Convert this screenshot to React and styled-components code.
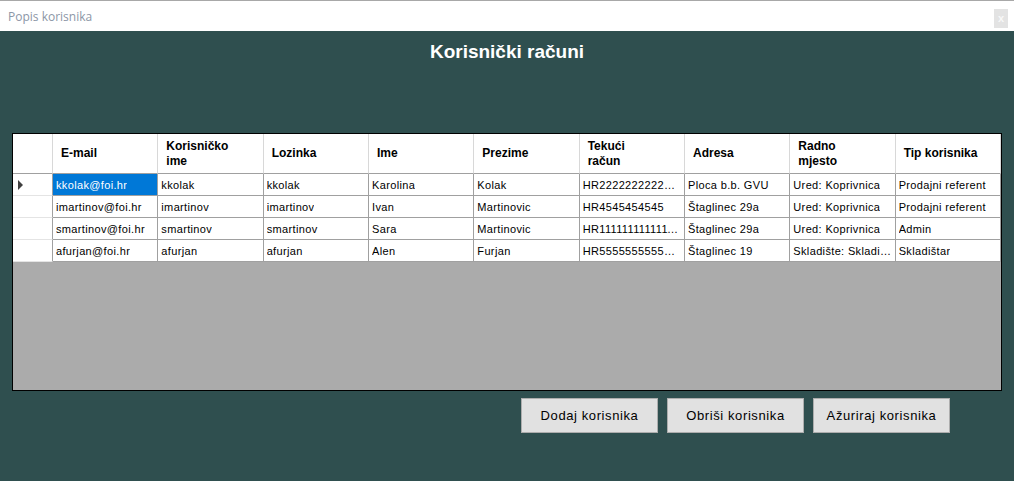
import React from "react";
import styled, { createGlobalStyle } from "styled-components";

const GlobalStyle = createGlobalStyle`
  html, body {
    margin: 0;
    padding: 0;
    background: #2f4f4f;
  }
  * { box-sizing: border-box; }
`;

const Window = styled.div`
  width: 1014px;
  height: 481px;
  display: flex;
  flex-direction: column;
  background: #2f4f4f;
  font-family: "Liberation Sans", Arial, sans-serif;
  overflow: hidden;
`;

const TitleBar = styled.div`
  height: 31px;
  background: #fff;
  border-top: 1px solid #a8a8a8;
  display: flex;
  align-items: center;
  justify-content: space-between;
  padding: 0 6px 0 8px;
`;

const WindowTitle = styled.span`
  font-family: "Open Sans", sans-serif;
  font-size: 12px;
  color: #8c96a6;
`;

const CloseButton = styled.div`
  width: 14px;
  height: 19px;
  margin-top: 4px;
  background: #e3e3e3;
  color: #f8f8f8;
  font-size: 11px;
  font-weight: bold;
  display: flex;
  align-items: center;
  justify-content: center;
`;

const Content = styled.div`
  flex: 1;
  display: flex;
  flex-direction: column;
  padding: 0 12px;
`;

const Heading = styled.h1`
  margin: 9px 0 0;
  height: 93px;
  text-align: center;
  color: #fff;
  font-size: 19px;
  font-weight: bold;
  line-height: 24px;
`;

const Grid = styled.div`
  width: 990px;
  height: 258px;
  border: 1px solid #000;
  background: #ababab;
  display: grid;
  grid-template-columns: 40px repeat(9, 1fr);
  grid-auto-rows: 22px;
  grid-template-rows: 40px;
  align-content: start;
`;

const HeadCell = styled.div`
  background: #fff;
  border-right: 1px solid #d8d8d8;
  border-bottom: 1px solid #a0a0a0;
  padding: 0 8px;
  display: flex;
  align-items: center;
  font-size: 12px;
  font-weight: bold;
  line-height: 15px;
  color: #000;
`;

const RowHead = styled.div`
  background: #fff;
  border-right: 1px solid #a0a0a0;
  border-bottom: 1px solid #e4e4e4;
  display: flex;
  align-items: center;
  padding-left: 5px;
`;

const Cell = styled.div`
  background: ${(p) => (p.$selected ? "#0078d7" : "#fff")};
  color: ${(p) => (p.$selected ? "#fff" : "#000")};
  border-right: 1px solid #a0a0a0;
  border-bottom: 1px solid #a0a0a0;
  padding: 0 3px;
  display: flex;
  align-items: center;
  font-size: 11px;
  letter-spacing: 0.35px;
  white-space: nowrap;
  min-width: 0;
`;

const CellText = styled.span`
  overflow: hidden;
  text-overflow: ellipsis;
`;

const Arrow = styled.svg`
  width: 6px;
  height: 10px;
`;

const Actions = styled.div`
  display: flex;
  justify-content: flex-end;
  gap: 9px;
  margin-top: 7px;
  padding-right: 52px;
`;

const Button = styled.button`
  width: 137px;
  height: 35px;
  background: #e1e1e1;
  border: 1px solid #adadad;
  font-family: "Liberation Sans", Arial, sans-serif;
  font-size: 13px;
  letter-spacing: 0.6px;
  color: #000;
  padding: 0;
`;

const columns = [
  ["E-mail"],
  ["Korisničko", "ime"],
  ["Lozinka"],
  ["Ime"],
  ["Prezime"],
  ["Tekući", "račun"],
  ["Adresa"],
  ["Radno", "mjesto"],
  ["Tip korisnika"],
];

const users = [
  ["kkolak@foi.hr", "kkolak", "kkolak", "Karolina", "Kolak", "HR2222222222222222", "Ploca b.b. GVU", "Ured: Koprivnica", "Prodajni referent"],
  ["imartinov@foi.hr", "imartinov", "imartinov", "Ivan", "Martinovic", "HR4545454545", "Štaglinec 29a", "Ured: Koprivnica", "Prodajni referent"],
  ["smartinov@foi.hr", "smartinov", "smartinov", "Sara", "Martinovic", "HR1111111111111111", "Štaglinec 29a", "Ured: Koprivnica", "Admin"],
  ["afurjan@foi.hr", "afurjan", "afurjan", "Alen", "Furjan", "HR5555555555555555", "Štaglinec 19", "Skladište: Skladište Koprivnica", "Skladištar"],
];

export default function App() {
  return (
    <>
      <GlobalStyle />
      <Window>
        <TitleBar>
          <WindowTitle>Popis korisnika</WindowTitle>
          <CloseButton>x</CloseButton>
        </TitleBar>
        <Content>
          <Heading>Korisnički računi</Heading>
          <Grid>
            <HeadCell />
            {columns.map((c, i) => (
              <HeadCell key={i}>
                <span>
                  {c[0]}
                  {c[1] && <br />}
                  {c[1]}
                </span>
              </HeadCell>
            ))}
            {users.map((u, r) => (
              <React.Fragment key={r}>
                <RowHead>
                  {r === 0 && (
                    <Arrow viewBox="0 0 6 10">
                      <path d="M0 0 L5 5 L0 10 Z" fill="#404040" />
                    </Arrow>
                  )}
                </RowHead>
                {u.map((v, c) => (
                  <Cell key={c} $selected={r === 0 && c === 0}>
                    <CellText>{v}</CellText>
                  </Cell>
                ))}
              </React.Fragment>
            ))}
          </Grid>
          <Actions>
            <Button>Dodaj korisnika</Button>
            <Button>Obriši korisnika</Button>
            <Button>Ažuriraj korisnika</Button>
          </Actions>
        </Content>
      </Window>
    </>
  );
}
